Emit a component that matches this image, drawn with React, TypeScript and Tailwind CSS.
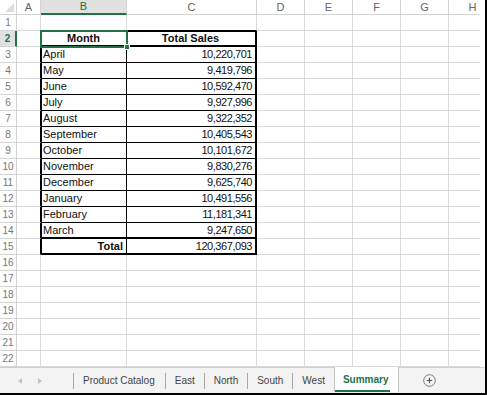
import React from "react";

const data: [string, string][] = [
  ["April", "10,220,701"],
  ["May", "9,419,796"],
  ["June", "10,592,470"],
  ["July", "9,927,996"],
  ["August", "9,322,352"],
  ["September", "10,405,543"],
  ["October", "10,101,672"],
  ["November", "9,830,276"],
  ["December", "9,625,740"],
  ["January", "10,491,556"],
  ["February", "11,181,341"],
  ["March", "9,247,650"],
];

const cols = ["A", "B", "C", "D", "E", "F", "G", "H"];

function bShadow(r: number): string {
  if (r === 2) return "shadow-[inset_1px_0_0_#000,inset_0_1px_0_#000,inset_0_-1px_0_#000]";
  if (r >= 14) return "shadow-[inset_1px_0_0_#000,inset_0_-1px_0_#000]";
  return "shadow-[inset_1px_0_0_#000]";
}
function cShadow(r: number): string {
  if (r === 2) return "shadow-[inset_0_1px_0_#000,inset_0_-1px_0_#000,inset_-1px_0_0_#000]";
  if (r >= 14) return "shadow-[inset_-1px_0_0_#000,inset_0_-1px_0_#000]";
  return "shadow-[inset_-1px_0_0_#000]";
}

function Row({ r }: { r: number }) {
  const inTable = r >= 2 && r <= 15;
  const cells: React.ReactNode[] = [];
  cells.push(
    <div
      key="h"
      className={
        r === 2
          ? "flex items-center justify-center border-b border-[#d4d4d4] border-r-2 border-r-[#217346] bg-[#e1e1e1] text-[10px] font-bold text-[#217346]"
          : "flex items-center justify-center border-r border-b border-[#d4d4d4] bg-white text-[10px] text-[#777]"
      }
    >
      {r}
    </div>
  );
  cells.push(
    <div
      key="A"
      className={
        inTable
          ? "border-b border-[#dadada] border-r border-r-black"
          : "border-r border-b border-[#dadada]"
      }
    />
  );
  if (inTable) {
    let content: React.ReactNode = null;
    const cls = "flex items-end pb-[2px] px-[2px] text-[11px] leading-none text-[#111] border-r border-b border-black ";
    if (r === 2) {
      content = <span className="w-full text-center font-bold">Month</span>;
    } else if (r === 15) {
      content = <span className="w-full text-right font-bold pr-[1px]">Total</span>;
    } else {
      content = <span>{data[r - 3][0]}</span>;
    }
    cells.push(
      <div key="B" className={cls + bShadow(r)}>
        {content}
      </div>
    );
    let cContent: React.ReactNode;
    if (r === 2) cContent = <span className="w-full text-center font-bold">Total Sales</span>;
    else if (r === 15) cContent = <span className="w-full text-right tracking-[-0.45px]">120,367,093</span>;
    else cContent = <span className="w-full text-right tracking-[-0.45px]">{data[r - 3][1]}</span>;
    cells.push(
      <div
        key="C"
        className={
          "flex items-end pb-[2px] pl-[2px] pr-[4px] text-[11px] leading-none text-[#111] border-r border-b border-black " +
          cShadow(r)
        }
      >
        {cContent}
      </div>
    );
  } else if (r === 1) {
    cells.push(<div key="B" className="border-r border-[#dadada] border-b border-b-black" />);
    cells.push(<div key="C" className="border-r border-[#dadada] border-b border-b-black" />);
  } else {
    cells.push(<div key="B" className="border-r border-b border-[#dadada]" />);
    cells.push(<div key="C" className="border-r border-b border-[#dadada]" />);
  }
  for (const c of ["D", "E", "F", "G", "H"]) {
    cells.push(<div key={c} className="border-r border-b border-[#dadada]" />);
  }
  return <>{cells}</>;
}

export default function App() {
  const rows = Array.from({ length: 22 }, (_, i) => i + 1);
  return (
    <div className="w-[487px] h-[395px] bg-white border-r-2 border-b-2 border-black flex flex-col overflow-hidden font-['Liberation_Sans',Arial,sans-serif]">
      <div className="h-[367px] w-[480px] shrink-0 overflow-hidden relative">
        <div className="grid w-max grid-cols-[17px_24px_86px_130px_48px_48px_48px_48px_48px] grid-rows-[15px_repeat(22,16px)]">
          <div className="relative border-r border-b border-[#d4d4d4] bg-white">
            <svg className="absolute right-[2px] bottom-[2px]" width="9" height="9" viewBox="0 0 9 9">
              <polygon points="9,0 9,9 0,9" fill="#dcdcdc" />
            </svg>
          </div>
          {cols.map((c) => (
            <div
              key={c}
              className={
                c === "B"
                  ? "flex items-center justify-center border-r border-[#d4d4d4] border-b-2 border-b-[#217346] bg-[#e1e1e1] text-[11px] text-[#217346]"
                  : "flex items-center justify-center border-r border-b border-[#d4d4d4] bg-white text-[11px] text-[#666]"
              }
            >
              {c}
            </div>
          ))}
          {rows.map((r) => (
            <Row key={r} r={r} />
          ))}
        </div>
        <div className="absolute left-[40px] top-[30px] w-[88px] h-[18px] border-2 border-[#217346] pointer-events-none" />
        <div className="absolute left-[124px] top-[44px] w-[6px] h-[6px] bg-[#217346] border border-white pointer-events-none" />
      </div>
      <div className="flex-1 flex items-stretch bg-[#f3f3f3] border-t border-[#d0d0d0] text-[10px] text-[#444]">
        <div className="w-[73px] flex items-center pl-[18px] gap-[16px]">
          <svg width="4" height="6" viewBox="0 0 4 6">
            <polygon points="4,0 4,6 0,3" fill="#c4c4c4" />
          </svg>
          <svg width="4" height="6" viewBox="0 0 4 6">
            <polygon points="0,0 0,6 4,3" fill="#c4c4c4" />
          </svg>
        </div>
        <div className="w-px h-[16px] bg-[#a9a9a9] self-center" />
        <div className="flex items-center pl-[9px] pr-[10px]">Product Catalog</div>
        <div className="w-px h-[16px] bg-[#a9a9a9] self-center" />
        <div className="flex items-center px-[9px]">East</div>
        <div className="w-px h-[16px] bg-[#a9a9a9] self-center" />
        <div className="flex items-center px-[9px]">North</div>
        <div className="w-px h-[16px] bg-[#a9a9a9] self-center" />
        <div className="flex items-center px-[9px]">South</div>
        <div className="w-px h-[16px] bg-[#a9a9a9] self-center" />
        <div className="flex items-center px-[9px]">West</div>
        <div className="-mt-px mb-[1px] flex items-stretch bg-white border-x border-[#c6c6c6] pr-[8px]">
          <div className="flex items-center pl-[8px] pr-[1px] border-b-2 border-[#217346] font-bold text-[#217346] mt-[2px]">
            Summary
          </div>
        </div>
        <div className="flex items-center pl-[24px]">
          <svg width="13" height="13" viewBox="0 0 13 13">
            <circle cx="6.5" cy="6.5" r="5.8" fill="none" stroke="#7a7a7a" strokeWidth="1" />
            <path d="M6.5 3.8 V9.2 M3.8 6.5 H9.2" stroke="#555" strokeWidth="1.2" />
          </svg>
        </div>
      </div>
    </div>
  );
}
